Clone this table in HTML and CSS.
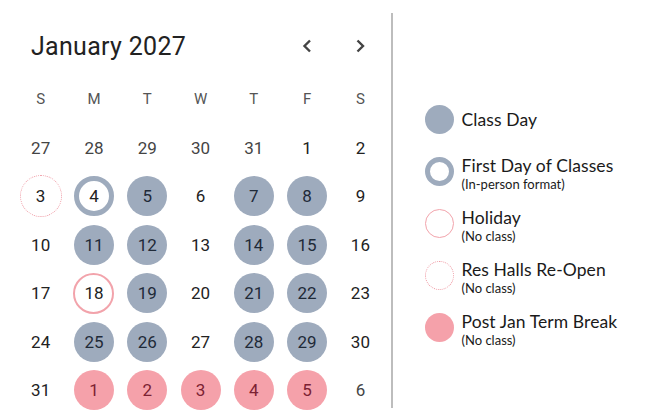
FILE: index.html
```html
<!DOCTYPE html>
<html>
<head>
<meta charset="utf-8">
<link rel="stylesheet" href="styles.css">
</head>
<body>
<div class="page">
  <section class="calendar">
    <header class="cal-head">
      <h1 class="title">January 2027</h1>
      <button class="nav" aria-label="Previous month">
        <svg width="12" height="14" viewBox="0 0 12 14"><path d="M9 1.5 L3.5 7 L9 12.5" fill="none" stroke="#444" stroke-width="2.4"/></svg>
      </button>
      <button class="nav" aria-label="Next month">
        <svg width="12" height="14" viewBox="0 0 12 14"><path d="M3.5 1.5 L9 7 L3.5 12.5" fill="none" stroke="#444" stroke-width="2.4"/></svg>
      </button>
    </header>
    <div class="grid">
      <div class="wd">S</div><div class="wd">M</div><div class="wd">T</div><div class="wd">W</div><div class="wd">T</div><div class="wd">F</div><div class="wd">S</div>

      <div class="day other"><span>27</span></div>
      <div class="day other"><span>28</span></div>
      <div class="day other"><span>29</span></div>
      <div class="day other"><span>30</span></div>
      <div class="day other"><span>31</span></div>
      <div class="day"><span>1</span></div>
      <div class="day"><span>2</span></div>

      <div class="day"><span class="reopen">3</span></div>
      <div class="day"><span class="first">4</span></div>
      <div class="day"><span class="class">5</span></div>
      <div class="day"><span>6</span></div>
      <div class="day"><span class="class">7</span></div>
      <div class="day"><span class="class">8</span></div>
      <div class="day"><span>9</span></div>

      <div class="day"><span>10</span></div>
      <div class="day"><span class="class">11</span></div>
      <div class="day"><span class="class">12</span></div>
      <div class="day"><span>13</span></div>
      <div class="day"><span class="class">14</span></div>
      <div class="day"><span class="class">15</span></div>
      <div class="day"><span>16</span></div>

      <div class="day"><span>17</span></div>
      <div class="day"><span class="holiday">18</span></div>
      <div class="day"><span class="class">19</span></div>
      <div class="day"><span>20</span></div>
      <div class="day"><span class="class">21</span></div>
      <div class="day"><span class="class">22</span></div>
      <div class="day"><span>23</span></div>

      <div class="day"><span>24</span></div>
      <div class="day"><span class="class">25</span></div>
      <div class="day"><span class="class">26</span></div>
      <div class="day"><span>27</span></div>
      <div class="day"><span class="class">28</span></div>
      <div class="day"><span class="class">29</span></div>
      <div class="day"><span>30</span></div>

      <div class="day"><span>31</span></div>
      <div class="day"><span class="brk">1</span></div>
      <div class="day"><span class="brk">2</span></div>
      <div class="day"><span class="brk">3</span></div>
      <div class="day"><span class="brk">4</span></div>
      <div class="day"><span class="brk">5</span></div>
      <div class="day other"><span>6</span></div>
    </div>
  </section>
  <div class="divider"></div>
  <aside class="legend">
    <div class="item">
      <span class="dot class-dot"></span>
      <div class="label"><div class="name">Class Day</div></div>
    </div>
    <div class="item">
      <span class="dot first-dot"></span>
      <div class="label two"><div class="name">First Day of Classes</div><div class="sub">(In-person format)</div></div>
    </div>
    <div class="item">
      <span class="dot holiday-dot"></span>
      <div class="label two"><div class="name">Holiday</div><div class="sub">(No class)</div></div>
    </div>
    <div class="item">
      <span class="dot reopen-dot"></span>
      <div class="label two"><div class="name">Res Halls Re-Open</div><div class="sub">(No class)</div></div>
    </div>
    <div class="item">
      <span class="dot brk-dot"></span>
      <div class="label two"><div class="name">Post Jan Term Break</div><div class="sub">(No class)</div></div>
    </div>
  </aside>
</div>
</body>
</html>
```

FILE: styles.css
```css
* { box-sizing: border-box; }
html, body { margin: 0; padding: 0; background: #fff; }
body { width: 650px; height: 419px; overflow: hidden; font-family: Roboto, "Liberation Sans", sans-serif; color: #222; }

.page { display: flex; height: 419px; }

.calendar { width: 391px; padding: 19px 0 0 14px; }

.cal-head { display: grid; grid-template-columns: 1fr 53.3px 53.3px; align-items: center; height: 54px; width: 373px; }
.title { margin: 0 0 0 17px; font-size: 25px; font-weight: 400; color: #222; letter-spacing: 0.3px; }
.nav { border: 0; background: none; padding: 0; display: flex; justify-content: center; align-items: center; height: 54px; }

.grid { display: grid; grid-template-columns: repeat(7, 53.3px); grid-auto-rows: 48.5px; margin-top: 1.75px; }
.wd { display: flex; align-items: center; justify-content: center; font-size: 15px; color: #555; }
.day { display: flex; align-items: center; justify-content: center; font-size: 17px; }
.day span { width: 40px; height: 40px; border-radius: 50%; display: flex; align-items: center; justify-content: center; color: #222; }
.day.other span { color: #444; }

.day .class { background: #9eabbd; color: #1f2a38; }
.day .first { border: 5px solid #9eabbd; }
.day .holiday { width: 41px; height: 41px; border: 2px solid #f2a3ab; }
.day .reopen { width: 42px; height: 42px; border: 1.5px dotted #ef9aa4; }
.day .brk { background: #f5a1aa; color: #7c2233; }

.divider { width: 1.5px; background: #bdbdbd; margin: 13px 0 11px 0; }

.legend { display: flex; flex-direction: column; padding: 94px 0 0 32px; font-family: Lato, "Open Sans", sans-serif; color: #1a1a1a; }
.item { display: flex; align-items: center; height: 51.8px; gap: 8px; }
.dot { width: 29px; height: 29px; border-radius: 50%; flex: none; }
.class-dot { background: #9eabbd; }
.first-dot { border: 5px solid #9eabbd; }
.holiday-dot { border: 1.75px solid #f2a3ab; }
.reopen-dot { border: 1.5px dotted #ef9aa4; }
.brk-dot { background: #f5a1aa; }
.label { display: flex; flex-direction: column; }
.label.two { padding-top: 4px; }
.name { font-size: 17.5px; line-height: 21px; letter-spacing: 0.1px; }
.sub { font-size: 13px; line-height: 16px; }
```
